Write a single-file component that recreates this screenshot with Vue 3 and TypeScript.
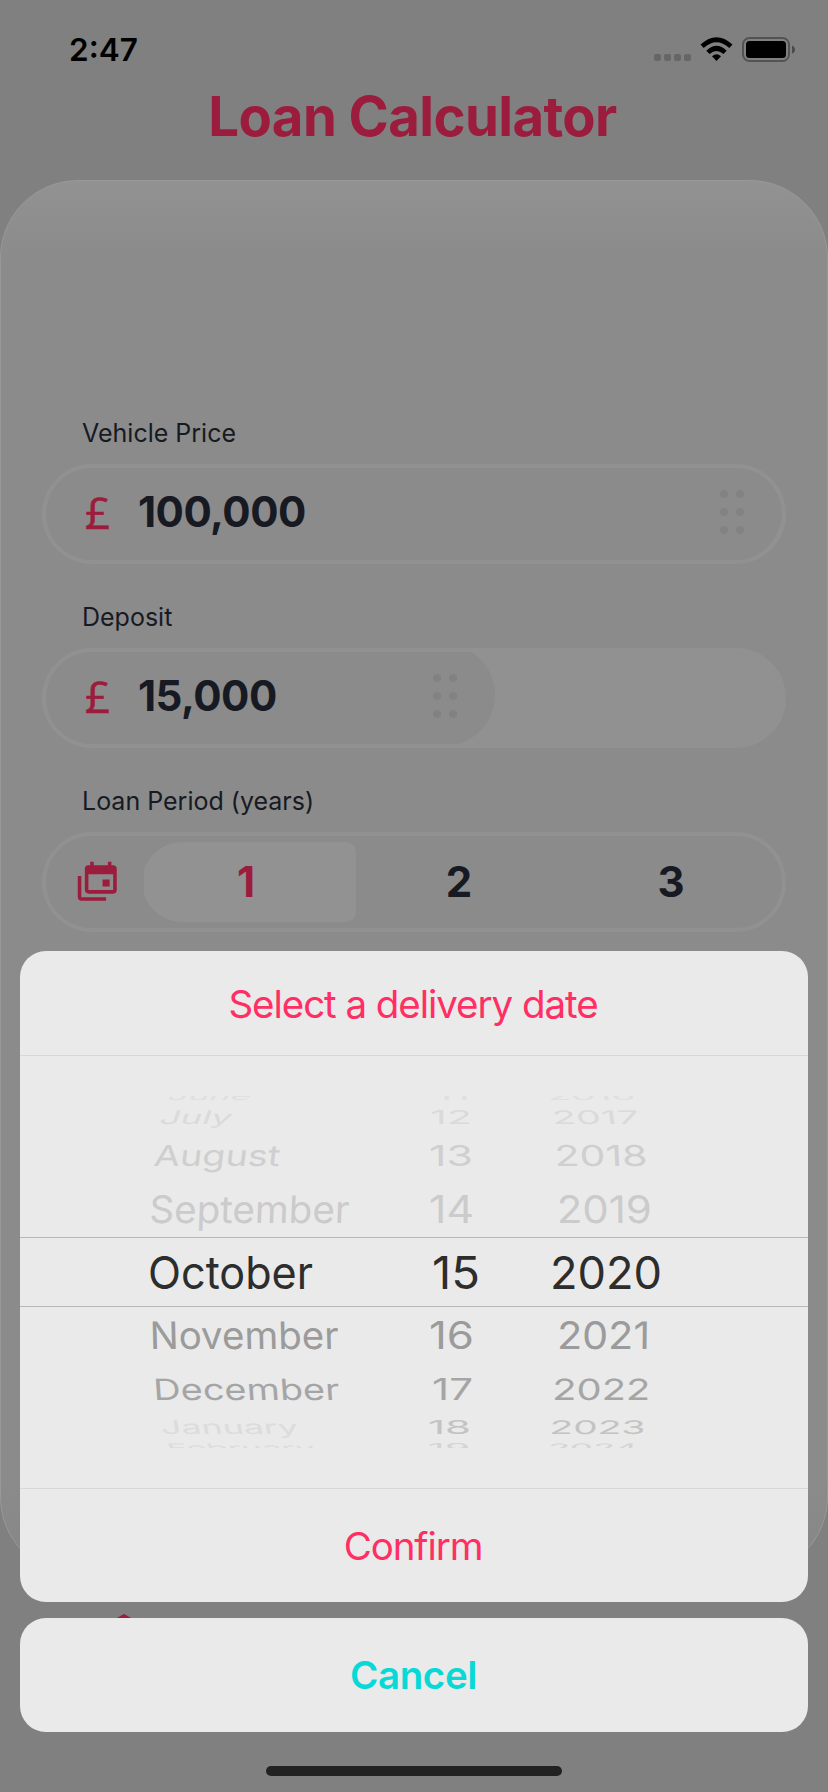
<script setup lang="ts">
interface WheelItem {
  text: string
  x: number
  width: number
  base: number
  cap: number
  color: string
  skew: number
}

interface MoneyField {
  label: string
  value: string
  fill: number
}

const fields: MoneyField[] = [
  { label: 'Vehicle Price', value: '100,000', fill: 736 },
  { label: 'Deposit', value: '15,000', fill: 449 },
]

const periods: number[] = [1, 2, 3]
const selectedPeriod = 1

// Each row: baseline, cap height, colours and lean of the rotating drum.
const rows = [
  { base: 1100, cap: 9, lean: -34, color: '#dfdfdf' },
  { base: 1123.7, cap: 13.5, lean: -20, color: '#dadada' },
  { base: 1166, cap: 21, lean: -7, color: '#cfcfcf' },
  { base: 1223, cap: 27.5, lean: -2, color: '#cbcbcb' },
  { base: 1289, cap: 33, lean: 0, color: '#2d2d2d' },
  { base: 1348.7, cap: 27.5, lean: 1.5, color: '#9b9b9b' },
  { base: 1400, cap: 21.3, lean: 4, color: '#a5a5a5' },
  { base: 1434, cap: 13.7, lean: 10, color: '#c3c3c3' },
  { base: 1452, cap: 8.5, lean: 25, color: '#d4d4d4' },
]

const months: [string, number, number][] = [
  ['June', 168, 247], ['July', 160, 228], ['August', 155, 277], ['September', 151, 347],
  ['October', 150, 311], ['November', 152, 337], ['December', 156, 338], ['January', 164, 297], ['February', 171, 315],
]
const days: [string, number, number][] = [
  ['11', 437, 468], ['12', 432, 470], ['13', 431, 471], ['14', 431, 472],
  ['15', 434, 478], ['16', 431, 472], ['17', 434, 471], ['18', 430, 469], ['19', 430, 468],
]
const years: [string, number, number][] = [
  ['2016', 550, 634], ['2017', 555, 638], ['2018', 557, 646], ['2019', 559, 650],
  ['2020', 552, 660], ['2021', 559, 648], ['2022', 554, 648], ['2023', 551, 643], ['2024', 549, 635],
]

function column(entries: [string, number, number][], leanFactor: number, monthColumn = false): WheelItem[] {
  return entries.map(([text, left, right], i) => ({
    text,
    x: left - 2,
    width: right - left + 4,
    base: rows[i].base,
    cap: rows[i].cap,
    color: monthColumn && i > 6 ? '#dcdcdc' : rows[i].color,
    skew: rows[i].lean * leanFactor,
  }))
}

const wheel: WheelItem[] = [...column(months, 1, true), ...column(days, 0), ...column(years, -0.4)]
</script>

<template>
  <div class="screen">
    <header class="status">
      <span class="time">2:47</span>
      <svg class="status-icons" width="144" height="28" viewBox="0 0 144 28">
        <g fill="#666">
          <rect x="1" y="18" width="7" height="7" rx="2" />
          <rect x="11" y="18" width="7" height="7" rx="2" />
          <rect x="21" y="18" width="7" height="7" rx="2" />
          <rect x="31" y="18" width="7" height="7" rx="2" />
        </g>
        <path d="M47.500 8.600 Q63.500 -6.200 79.500 8.600 L76.300 12 Q63.500 .6 50.700 12 Z" />
        <path d="M53.300 14.700 Q63.500 4.900 73.700 14.700 L70.400 18 Q63.500 11.800 56.600 18 Z" />
        <path d="M59 20.300 Q63.500 16.300 68 20.300 L63.500 25 Z" />
        <rect x="90" y="2" width="46" height="23" rx="6.500" fill="none" stroke="#535353" stroke-width="2" />
        <rect x="93" y="5" width="40" height="17" rx="3.500" />
        <path d="M139 9.500 Q142 10.500 142 13.500 Q142 16.500 139 17.500 Z" fill="#4b4b4b" />
      </svg>
    </header>

    <h1 class="title">Loan Calculator</h1>

    <main class="card">
      <section v-for="field in fields" :key="field.label" class="group">
        <label class="label">{{ field.label }}</label>
        <div class="field slider">
          <div class="fill" :style="{ width: field.fill + 'px' }">
            <span class="pound">£</span>
            <span class="value">{{ field.value }}</span>
            <span class="grip"><i v-for="n in 6" :key="n" /></span>
          </div>
        </div>
      </section>

      <section class="group">
        <label class="label">Loan Period (years)</label>
        <div class="field">
          <svg class="calendar" viewBox="0 0 24 24">
            <path d="M21,17V8H7V17H21M21,3A2,2 0 0,1 23,5V17A2,2 0 0,1 21,19H7C5.89,19 5,18.1 5,17V5A2,2 0 0,1 7,3H8V1H10V3H18V1H20V3H21M3,21H17V23H3C1.89,23 1,22.1 1,21V9H3V21M19,15H15V11H19V15Z" />
          </svg>
          <div class="periods">
            <button v-for="p in periods" :key="p" class="period" :class="{ active: p === selectedPeriod }">{{ p }}</button>
          </div>
        </div>
      </section>
    </main>

    <svg class="hexagon" width="72" height="80" viewBox="0 0 72 80">
      <path d="M36 0 L70 19 V60 L36 79 L2 60 V19 Z" />
    </svg>

    <div class="overlay">
      <div class="sheet">
        <div class="sheet-title">Select a delivery date</div>
        <svg class="wheel" width="788" height="432" viewBox="20 1056 788 432">
          <defs>
            <clipPath id="drum"><rect x="20" y="1096" width="788" height="352" /></clipPath>
          </defs>
          <g clip-path="url(#drum)">
            <text
              v-for="item in wheel"
              :key="item.text"
              :fill="item.color"
              :textLength="item.width"
              lengthAdjust="spacingAndGlyphs"
              :transform="`translate(${item.x} ${item.base}) skewX(${item.skew}) scale(1 ${item.cap / 32.7})`"
            >{{ item.text }}</text>
          </g>
          <path d="M20 1237.500 H808 M20 1306.500 H808" stroke="#b7b7b7" />
        </svg>
        <button class="confirm">Confirm</button>
      </div>
      <button class="cancel">Cancel</button>
      <div class="home-bar" />
    </div>
  </div>
</template>

<style>
body {
  background: #808080;
}
</style>

<style scoped>
.screen {
  position: relative;
  width: 828px;
  height: 1792px;
  overflow: hidden;
  background: #808080;
  font-family: Inter, "Liberation Sans", sans-serif;
  color: #171a22;
}

button {
  border: 0;
  padding: 0;
  background: none;
  font-family: inherit;
}

.status {
  display: flex;
  justify-content: space-between;
  height: 90px;
  padding: 0 31px 0 69px;
  box-sizing: border-box;
  color: #000;
}

.time {
  margin-top: 30px;
  font-size: 31.500px;
  line-height: 40px;
  font-weight: 600;
}

.status-icons {
  margin-top: 36px;
}

.title {
  margin: 0;
  height: 90px;
  padding-right: 3px;
  line-height: 53px;
  font-size: 54.500px;
  font-weight: 700;
  letter-spacing: -0.600px;
  text-align: center;
  color: #9b1c3c;
}

.card {
  height: 1395px;
  box-sizing: border-box;
  padding: 236px 41px 0;
  border: 1px solid #989898;
  border-radius: 78px;
  background: linear-gradient(#929292, #8b8b8b 76px, #8b8b8b 1300px, #868686);
}

.group {
  height: 184px;
}

.label {
  display: block;
  height: 47px;
  padding-left: 40px;
  font-size: 25px;
  line-height: 32px;
}

.field {
  display: flex;
  width: 744px;
  height: 100px;
  box-sizing: border-box;
  overflow: hidden;
  border: 4px solid #919191;
  border-radius: 50px;
}

.slider {
  background: #919191;
}

.fill {
  display: flex;
  flex: none;
  align-items: center;
  height: 102px;
  margin-top: -8px;
  box-sizing: border-box;
  padding: 0 38px 0 39px;
  border-radius: 0 51px 51px 0;
  background: #8b8b8b;
}

.pound {
  width: 30px;
  margin-top: 2px;
  font-family: "Open Sans", "Noto Sans", sans-serif;
  font-size: 44px;
  line-height: 60px;
  color: #9b1c3c;
  -webkit-text-stroke: 0.600px #9b1c3c;
}

.value {
  flex: 1;
  margin: 2px 0 0 23px;
  font-size: 42px;
  line-height: 50px;
  font-weight: 700;
  letter-spacing: -0.500px;
}

.grip {
  display: grid;
  grid-template-columns: 8px 8px;
  gap: 10px 8px;
  margin-top: 2px;
}

.grip i {
  width: 8px;
  height: 8px;
  border-radius: 50%;
  background: #828282;
}

.calendar {
  flex: none;
  width: 42.500px;
  height: 42.500px;
  margin: 24px 0 0 29.500px;
  fill: #9b1c3c;
}

.periods {
  display: flex;
  height: 80px;
  margin: 6px 0 0 26px;
  overflow: hidden;
}

.period {
  width: 212px;
  height: 80px;
  padding: 0 6px 2px 0;
  font-size: 42px;
  font-weight: 700;
  color: #171a22;
}

.period.active {
  width: 214px;
  margin-left: -2px;
  border-radius: 40px 10px 10px 40px;
  background: #929292;
  color: #9b1c3c;
}

.hexagon {
  position: absolute;
  left: 88px;
  top: 1614px;
  fill: #9b1c3c;
}

.overlay {
  position: absolute;
  left: 20px;
  right: 20px;
  bottom: 16px;
  display: flex;
  flex-direction: column;
  align-items: center;
}

.sheet {
  width: 788px;
  height: 651px;
  border-radius: 26px;
  overflow: hidden;
  background: #eaeaea;
}

.sheet-title {
  height: 104px;
  padding-right: 2px;
  line-height: 107px;
  border-bottom: 1px solid #d8d8d8;
  text-align: center;
  font-size: 38.500px;
  letter-spacing: -1.050px;
  color: #ff2e63;
}

.wheel {
  display: block;
  font-size: 45px;
}

.confirm {
  display: block;
  width: 788px;
  height: 114px;
  padding: 1px 2px 0 0;
  border-top: 1px solid #d8d8d8;
  font-size: 38.500px;
  letter-spacing: -1.100px;
  color: #ff2e63;
}

.cancel {
  width: 788px;
  height: 114px;
  margin-top: 16px;
  padding-right: 1px;
  border-radius: 26px;
  background: #eaeaea;
  font-size: 38.500px;
  font-weight: 600;
  letter-spacing: -0.350px;
  color: #08d9d6;
}

.home-bar {
  width: 296px;
  height: 10px;
  margin-top: 34px;
  border-radius: 5px;
  background: #222;
}
</style>
